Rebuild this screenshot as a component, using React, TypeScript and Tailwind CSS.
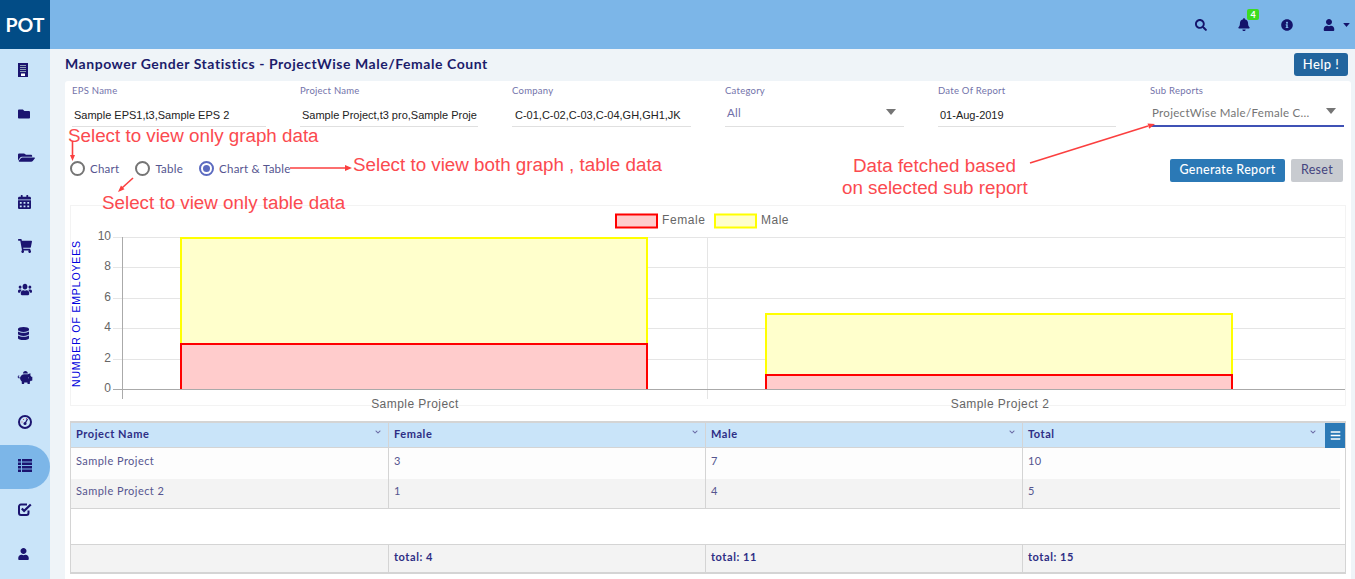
import React from 'react';
import {
  FaFolder, FaFolderOpen, FaCalendarAlt, FaShoppingCart, FaUsers, FaDatabase,
  FaPiggyBank, FaUser, FaSearch, FaBell, FaInfoCircle, FaBars, FaChevronDown,
} from 'react-icons/fa';

const BuildingIcon = () => (
  <svg viewBox="0 0 10 14" className="h-[14px] w-[10px]">
    <rect width="10" height="14" fill="#1b1470" />
    <path d="M2 2h6v1H2zM2 4h6v1H2zM2 6h6v1H2zM2 8h6v1H2z" fill="#8d9fb5" />
    <rect x="3" y="10.500" width="4" height="2.500" fill="#fff" />
  </svg>
);

const GaugeIcon = () => (
  <svg viewBox="0 0 14 14" className="h-[14px] w-[14px]" fill="none">
    <circle cx="7" cy="7" r="6" stroke="#1b1470" strokeWidth="2" />
    <path d="M7 8.500L9.500 4" stroke="#1b1470" strokeWidth="1.300" />
    <circle cx="7" cy="8.500" r="1.500" fill="#1b1470" />
    <path d="M3.500 7h1M5 4.500h1M8 3.500h1" stroke="#c0506a" strokeWidth="1" />
  </svg>
);

const ListIcon = () => (
  <svg viewBox="0 0 14 13" className="h-[13px] w-[14px]" fill="#1b1470">
    <path d="M0 0h3v2.400H0zM4 0h10v2.400H4zM0 3.500h3v2.400H0zM4 3.500h10v2.400H4zM0 7h3v2.400H0zM4 7h10v2.400H4zM0 10.500h3v2.400H0zM4 10.500h10v2.400H4z" />
  </svg>
);

const CheckIcon = () => (
  <svg viewBox="0 0 14 13" className="h-[13px] w-[14px]" fill="none" stroke="#1b1470">
    <path d="M10.500 7.500v2.500a2 2 0 0 1-2 2H3a2 2 0 0 1-2-2V3.500a2 2 0 0 1 2-2h6" strokeWidth="2" />
    <path d="M3.800 5.500l2.300 2.400L12.800 1.500" strokeWidth="2.200" />
  </svg>
);

const Caret: React.FC<{ className: string }> = ({ className }) => (
  <svg viewBox="0 0 10 6" className={className} fill="currentColor">
    <path d="M0 0h10L5 6z" />
  </svg>
);

const sideIcons: React.ReactNode[] = [
  <BuildingIcon />,
  <FaFolder className="h-[12px] w-[12px]" />,
  <FaFolderOpen className="h-[11px] w-[17px]" preserveAspectRatio="none" />,
  <FaCalendarAlt className="h-[14px] w-[13px]" preserveAspectRatio="none" />,
  <FaShoppingCart className="h-[14px] w-[14px]" preserveAspectRatio="none" />,
  <FaUsers className="h-[13px] w-[14px]" preserveAspectRatio="none" />,
  <FaDatabase className="h-[13px] w-[11px]" preserveAspectRatio="none" />,
  <FaPiggyBank className="h-[13px] w-[16px] -ml-[1px]" />,
  <GaugeIcon />,
  <ListIcon />,
  <CheckIcon />,
  <FaUser className="h-[12px] w-[11px]" />,
];

const tableCols = ['w-[318px]', 'w-[317px]', 'w-[317px]', 'flex-1'];

const Field: React.FC<{ label: string; value: string; width: string; inset?: string }> = ({ label, value, width, inset = 'pl-[2px]' }) => (
  <div className={`${width} shrink-0`}>
    <div className="text-[9.5px] leading-[12px] text-[#7373aa] tracking-[0.25px]">{label}</div>
    <div className={`mt-[5px] h-[25px] border-b border-[#e0e0e0] ${inset} text-[11px] leading-[26px] text-[#222] font-['Liberation_Sans',sans-serif] whitespace-nowrap overflow-hidden`}>
      {value}
    </div>
  </div>
);

const Radio: React.FC<{ label: string; checked?: boolean }> = ({ label, checked }) => (
  <div className="flex items-center gap-[5px]">
    <span className={`h-[15px] w-[15px] rounded-full border-2 flex items-center justify-center ${checked ? 'border-[#5c6bc0]' : 'border-[#757575]'}`}>
      {checked && <span className="h-[7px] w-[7px] rounded-full bg-[#5c6bc0]" />}
    </span>
    <span className="text-[11.5px] tracking-[0.25px] text-[#55558f]">{label}</span>
  </div>
);

const Note: React.FC<{ className: string; children: React.ReactNode }> = ({ className, children }) => (
  <div className={`absolute font-['Liberation_Sans',sans-serif] text-[18.8px] leading-[20px] text-[#fb4a4f] whitespace-nowrap ${className}`}>
    {children}
  </div>
);

const Chart = () => {
  const grid = [237, 267, 298, 328, 359, 389];
  return (
    <svg viewBox="70 205 1276 201" className="block h-[201px] w-[1276px] overflow-visible">
      <rect x="70.5" y="205.5" width="1275" height="200" fill="#fff" stroke="#f3f3f3" />
      <rect x="616" y="214.5" width="41" height="13" fill="#ffcccc" stroke="#ff0000" strokeWidth="2" />
      <text x="662" y="224" fontSize="12" fill="#666" letterSpacing="0.6" fontFamily="Liberation Sans">Female</text>
      <rect x="715" y="214.5" width="41" height="13" fill="#ffffcc" stroke="#ffff00" strokeWidth="2" />
      <text x="761" y="224" fontSize="12" fill="#666" letterSpacing="0.5" fontFamily="Liberation Sans">Male</text>
      {grid.map((y, i) => (
        <line key={y} x1="113" x2="1345" y1={y + 0.5} y2={y + 0.5} stroke={i === 5 ? '#aaa' : '#e5e5e5'} />
      ))}
      <line x1="122.5" x2="122.5" y1="237" y2="399" stroke="#aaa" />
      <line x1="707.5" x2="707.5" y1="237" y2="399" stroke="#e5e5e5" />
      {['10', '8', '6', '4', '2', '0'].map((t, i) => (
        <text key={t} x="111" y={grid[i] + 3} textAnchor="end" fontSize="12" fill="#666" fontFamily="Liberation Sans">{t}</text>
      ))}
      <text
        transform="translate(80 387) rotate(-90)"
        fontSize="10.5"
        letterSpacing="0.85"
        fill="#0000dd"
        fontFamily="Liberation Sans"
      >
        NUMBER OF EMPLOYEES
      </text>
      <rect x="181" y="238" width="466" height="106" fill="#ffffcc" stroke="#ffff00" strokeWidth="2" />
      <path d="M181 389V344H647V389" fill="#ffcccc" stroke="#ff0000" strokeWidth="2" />
      <rect x="766" y="314" width="466" height="61" fill="#ffffcc" stroke="#ffff00" strokeWidth="2" />
      <path d="M766 389V375H1232V389" fill="#ffcccc" stroke="#ff0000" strokeWidth="2" />
      <line x1="113" x2="1345" y1="389.5" y2="389.5" stroke="#aaa" />
      <text x="415" y="408" textAnchor="middle" fontSize="12" letterSpacing="0.45" fill="#666" fontFamily="Liberation Sans">Sample Project</text>
      <text x="1000" y="408" textAnchor="middle" fontSize="12" letterSpacing="0.45" fill="#666" fontFamily="Liberation Sans">Sample Project 2</text>
    </svg>
  );
};

const Row: React.FC<{ cells: string[]; className: string; textClass: string }> = ({ cells, className, textClass }) => (
  <div className={`flex ${className}`}>
    {cells.map((c, i) => (
      <div key={i} className={`${tableCols[i]} px-[5px] ${i < 3 ? 'border-r border-[#d4d4d4]' : ''} ${textClass}`}>
        {c}
      </div>
    ))}
  </div>
);

export default function App() {
  return (
    <div className="relative h-screen w-full overflow-hidden bg-[#eff4f8] font-['Lato',sans-serif]">
      {/* Top bar */}
      <header className="flex h-[49px] bg-[#7cb6e8]">
        <div className="flex w-[50px] items-center justify-center bg-[#024c86] text-[19.5px] font-bold text-white">POT</div>
        <div className="flex flex-1 items-center justify-end pr-[5px] text-[#14146b]">
          <FaSearch className="mr-[31px] h-[12px] w-[12px]" />
          <div className="relative mr-[31px] h-[13px]">
            <FaBell className="h-[13px] w-[12px]" />
            <span className="absolute -top-[9px] left-[9px] flex h-[11px] w-[12px] items-center justify-center rounded-[2px] bg-[#3ddc1f] text-[9px] font-bold text-white">4</span>
          </div>
          <FaInfoCircle className="mr-[30px] h-[12px] w-[12px]" />
          <FaUser className="h-[12px] w-[12px]" />
          <Caret className="ml-[8px] h-[4px] w-[7px]" />
        </div>
      </header>

      <div className="flex">
        {/* Sidebar */}
        <aside className="h-[530px] w-[50px] shrink-0 bg-[#c9e4f9]">
          {sideIcons.map((icon, i) => (
            <div
              key={i}
              className={`flex h-[44px] items-center pb-[3px] pl-[18px] text-[#1b1470] ${i === 9 ? 'rounded-r-full bg-[#7cb6e8]' : ''}`}
            >
              {icon}
            </div>
          ))}
        </aside>

        <main className="min-w-0 flex-1 pl-[15px] pr-[4px]">
          <div className="flex h-[32px] items-center justify-between">
            <h1 className="mb-[3px] text-[14px] font-bold tracking-[0.54px] text-[#1c1c6b]">Manpower Gender Statistics - ProjectWise Male/Female Count</h1>
            <button className="mr-[3px] mt-[-1px] h-[23px] w-[54px] rounded-[3px] bg-[#22659e] text-[13px] font-medium tracking-[0.4px] text-white">Help !</button>
          </div>

          <div className="h-[520px] rounded-[3px] bg-white pl-[6px]">
            {/* Filters */}
            <div className="flex gap-[34px] pl-[1px] pt-[4px]">
              <Field label="EPS Name" value="Sample EPS1,t3,Sample EPS 2" width="w-[194px]" />
              <Field label="Project Name" value="Sample Project,t3 pro,Sample Proje" width="w-[178px]" />
              <Field label="Company" value="C-01,C-02,C-03,C-04,GH,GH1,JK" width="w-[179px]" inset="pl-[3px]" />
              <div className="relative w-[179px] shrink-0">
                <div className="text-[9.5px] leading-[12px] text-[#7373aa] tracking-[0.25px]">Category</div>
                <div className="mt-[5px] h-[25px] border-b border-[#e0e0e0] pl-[2px] text-[11.5px] leading-[21px] text-[#6f6fa8] tracking-[0.3px]">All</div>
                <Caret className="absolute right-[8px] top-[24px] h-[6px] w-[10px] text-[#757575]" />
              </div>
              <Field label="Date Of Report" value="01-Aug-2019" width="w-[178px]" />
              <div className="relative w-[194px] shrink-0">
                <div className="text-[9.5px] leading-[12px] text-[#7373aa] tracking-[0.25px]">Sub Reports</div>
                <div className="mt-[5px] h-[25px] border-b-2 border-[#3f51b5] pl-[2px] text-[11.5px] leading-[21px] text-[#757575] tracking-[0.3px]">ProjectWise Male/Female C...</div>
                <Caret className="absolute right-[8px] top-[23px] h-[6px] w-[10px] text-[#757575]" />
              </div>
            </div>

            {/* Radios + actions */}
            <div className="flex h-[78px] items-center justify-between pr-[8px] pt-[5px]">
              <div className="-ml-[1px] flex items-center gap-[16px]">
                <Radio label="Chart" />
                <Radio label="Table" />
                <Radio label="Chart & Table" checked />
              </div>
              <div className="flex gap-[6px] pt-[4px]">
                <button className="h-[23px] w-[115px] rounded-[2px] bg-[#2b79b6] text-[12.5px] font-medium tracking-[0.3px] text-white">Generate Report</button>
                <button className="h-[23px] w-[52px] rounded-[2px] bg-[#c8cbd0] text-[12.5px] tracking-[0.3px] text-[#45457f]">Reset</button>
              </div>
            </div>

            <div className="-ml-[1px]">
              <Chart />
            </div>

            {/* Table */}
            <div className="relative -ml-[1px] mt-[15px] h-[153px] w-[1276px] border border-t-2 border-b-2 border-[#d4d4d4] text-[11px]">
              <div className="flex h-[25px] border-b border-[#d4d4d4] bg-[#c9e4f9]">
                {['Project Name', 'Female', 'Male', 'Total'].map((h, i) => (
                  <div key={h} className={`${tableCols[i]} flex items-center justify-between px-[5px] pb-[2px] ${i < 3 ? 'border-r border-[#d4d4d4]' : 'pr-[27px]'} font-bold tracking-[0.55px] text-[#2e2e85]`}>
                    <span>{h}</span>
                    <FaChevronDown className="mb-[4px] mr-[2px] h-[6px] w-[6px] text-[#6a6aa5]" />
                  </div>
                ))}
              </div>
              <div className="absolute right-0 top-0 flex h-[25px] w-[20px] items-center justify-center bg-[#2b79b6] text-white">
                <FaBars className="h-[11px] w-[11px]" />
              </div>
              <div className="mr-[5px] border-b border-[#d4d4d4]">
                <Row cells={['Sample Project', '3', '7', '10']} className="h-[31px] bg-[#fdfdfd]" textClass="leading-[25px] tracking-[0.45px] text-[#55558f]" />
                <Row cells={['Sample Project 2', '1', '4', '5']} className="h-[29px] bg-[#f3f3f3]" textClass="leading-[23px] tracking-[0.45px] text-[#55558f]" />
              </div>
              <div className="h-[35px]" />
              <Row cells={['', 'total: 4', 'total: 11', 'total: 15']} className="h-[28px] border-t border-[#d4d4d4] bg-[#f3f3f3]" textClass="font-bold leading-[24px] tracking-[0.55px] text-[#2e2e85]" />
            </div>
          </div>
        </main>
      </div>

      {/* Annotations drawn over the screenshot */}
      <Note className="left-[68px] top-[126px]">Select to view only graph data</Note>
      <Note className="left-[353px] top-[155px]">Select to view both graph , table data</Note>
      <Note className="left-[102px] top-[193px]">Select to view only table data</Note>
      <Note className="left-[853px] top-[156px]">Data fetched based</Note>
      <Note className="left-[842px] top-[178px]">on selected sub report</Note>
      <svg className="pointer-events-none absolute left-0 top-0 h-[579px] w-[1355px]" viewBox="0 0 1355 579" fill="none">
        <g stroke="#fb3f3f" strokeWidth="1.600">
          <line x1="72.500" y1="141" x2="72.500" y2="156" />
          <line x1="133" y1="178" x2="122" y2="188" />
          <line x1="290" y1="168" x2="345" y2="168" />
          <line x1="1030" y1="163" x2="1148" y2="126" />
        </g>
        <g fill="#fb3f3f">
          <path d="M72.500 161l-2.500-6h5z" />
          <path d="M118 192l3-6.500 3.500 3.800z" />
          <path d="M352 168l-7-3v6z" />
          <path d="M1155 124l-7.500-.5 1.700 5.300z" />
        </g>
      </svg>
    </div>
  );
}
